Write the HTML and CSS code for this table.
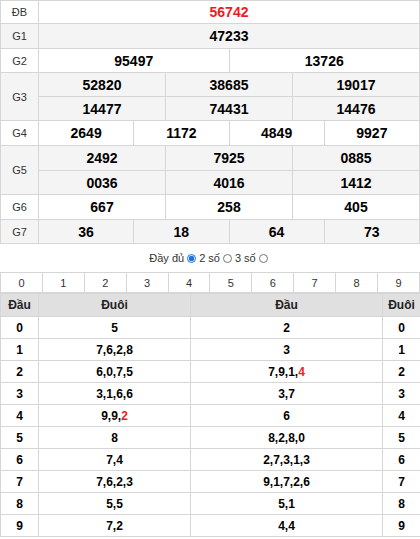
FILE: index.html
```html
<!DOCTYPE html>
<html lang="vi">
<head>
<meta charset="utf-8">
<link rel="stylesheet" href="styles.css">
</head>
<body>
<table class="kq">
  <colgroup>
    <col class="c-label">
    <col span="12">
  </colgroup>
  <tr class="r-db"><td class="lbl">ĐB</td><td colspan="12" class="num red">56742</td></tr>
  <tr class="alt r-g1"><td class="lbl">G1</td><td colspan="12" class="num">47233</td></tr>
  <tr class="r-g2"><td class="lbl">G2</td><td colspan="6" class="num">95497</td><td colspan="6" class="num">13726</td></tr>
  <tr class="alt r-g3"><td class="lbl" rowspan="2">G3</td><td colspan="4" class="num">52820</td><td colspan="4" class="num">38685</td><td colspan="4" class="num">19017</td></tr>
  <tr class="alt r-g3"><td colspan="4" class="num">14477</td><td colspan="4" class="num">74431</td><td colspan="4" class="num">14476</td></tr>
  <tr class="r-g4"><td class="lbl">G4</td><td colspan="3" class="num">2649</td><td colspan="3" class="num">1172</td><td colspan="3" class="num">4849</td><td colspan="3" class="num">9927</td></tr>
  <tr class="alt r-g5"><td class="lbl" rowspan="2">G5</td><td colspan="4" class="num">2492</td><td colspan="4" class="num">7925</td><td colspan="4" class="num">0885</td></tr>
  <tr class="alt r-g5b"><td colspan="4" class="num">0036</td><td colspan="4" class="num">4016</td><td colspan="4" class="num">1412</td></tr>
  <tr class="r-g6"><td class="lbl">G6</td><td colspan="4" class="num">667</td><td colspan="4" class="num">258</td><td colspan="4" class="num">405</td></tr>
  <tr class="alt r-g7"><td class="lbl">G7</td><td colspan="3" class="num">36</td><td colspan="3" class="num">18</td><td colspan="3" class="num">64</td><td colspan="3" class="num">73</td></tr>
</table>

<div class="opts">
  <span>Đầy đủ</span><input type="radio" name="m" class="rb" checked>
  <span>2 số</span><input type="radio" name="m" class="rb">
  <span>3 số</span><input type="radio" name="m" class="rb">
</div>

<table class="digits">
  <tr><td>0</td><td>1</td><td>2</td><td>3</td><td>4</td><td>5</td><td>6</td><td>7</td><td>8</td><td>9</td></tr>
</table>

<table class="lt">
  <colgroup>
    <col class="c-head">
    <col class="c-mid">
    <col class="c-mid2">
    <col class="c-tail">
  </colgroup>
  <tr class="hd"><th>Đầu</th><th>Đuôi</th><th>Đầu</th><th>Đuôi</th></tr>
  <tr><td>0</td><td>5</td><td>2</td><td>0</td></tr>
  <tr><td>1</td><td>7,6,2,8</td><td>3</td><td>1</td></tr>
  <tr><td>2</td><td>6,0,7,5</td><td>7,9,1,<span class="red">4</span></td><td>2</td></tr>
  <tr><td>3</td><td>3,1,6,6</td><td>3,7</td><td>3</td></tr>
  <tr><td>4</td><td>9,9,<span class="red">2</span></td><td>6</td><td>4</td></tr>
  <tr><td>5</td><td>8</td><td>8,2,8,0</td><td>5</td></tr>
  <tr><td>6</td><td>7,4</td><td>2,7,3,1,3</td><td>6</td></tr>
  <tr><td>7</td><td>7,6,2,3</td><td>9,1,7,2,6</td><td>7</td></tr>
  <tr><td>8</td><td>5,5</td><td>5,1</td><td>8</td></tr>
  <tr><td>9</td><td>7,2</td><td>4,4</td><td>9</td></tr>
</table>
</body>
</html>
```

FILE: styles.css
```css
html, body {
  margin: 0;
  padding: 0;
  background: #fff;
  font-family: "Liberation Sans", Arial, sans-serif;
  color: #000;
}

table {
  border-collapse: collapse;
  width: 420px;
  table-layout: fixed;
}

td, th {
  border: 1px solid #d6d6d6;
  padding: 0;
  text-align: center;
  vertical-align: middle;
}

.kq .c-label { width: 38px; }

.kq tr { height: 24px; }
.kq .r-g1, .kq .r-g4, .kq .r-g5, .kq .r-g6 { height: 25px; }
.kq .r-db { height: 23px; }

.kq .alt td { background: #f4f4f4; }

.lbl {
  font-size: 11px;
  color: #333;
}

.num {
  font-size: 14px;
  font-weight: bold;
}

.red { color: #ed1c24; }

.opts {
  height: 28px;
  display: flex;
  align-items: center;
  justify-content: center;
  font-size: 11px;
  color: #333;
  gap: 0;
}

.rb {
  width: 9px;
  height: 9px;
  margin: 0 3px 0 3px;
  accent-color: #1a73e8;
}

.digits tr { height: 20px; }
.digits td {
  font-size: 11px;
  color: #333;
}

.lt .c-head { width: 38px; }
.lt .c-mid { width: 152px; }
.lt .c-mid2 { width: 192px; }
.lt .c-tail { width: 38px; }

.lt .hd { height: 23px; }
.lt th {
  background: #e0e0e0;
  font-size: 12px;
  font-weight: bold;
  color: #222;
}

.lt tr { height: 22px; }
.lt td {
  font-size: 12px;
  font-weight: bold;
}
```
